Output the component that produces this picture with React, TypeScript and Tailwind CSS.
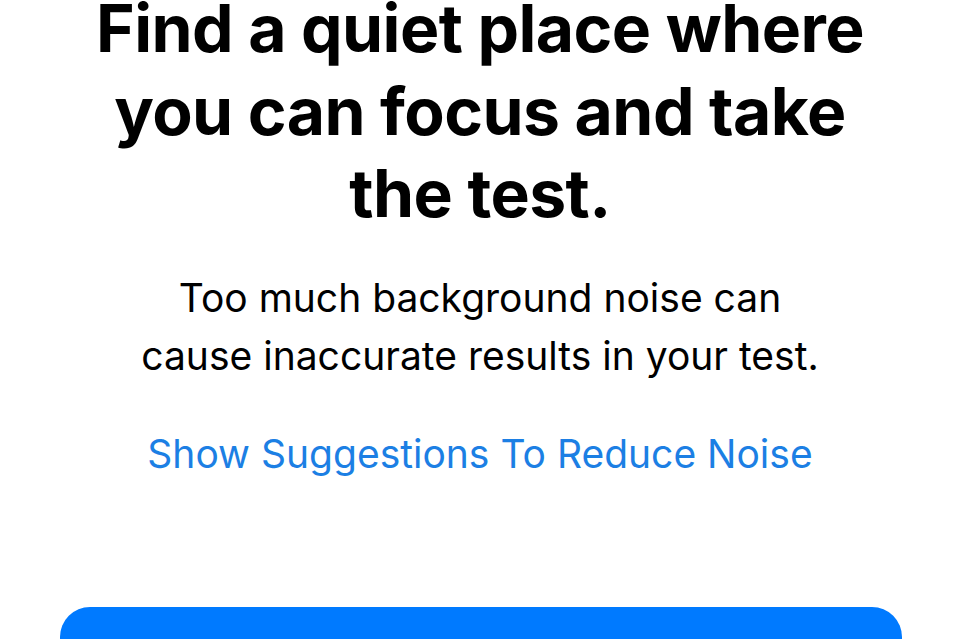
import React from 'react';

const App: React.FC = () => {
  return (
    <div
      className="w-[960px] h-[639px] overflow-hidden bg-white flex flex-col items-center text-center"
      style={{ fontFamily: 'Inter, "Noto Sans", sans-serif' }}
    >
      <h1 className="-mt-[13px] text-[66px] leading-[82.5px] font-bold text-black tracking-[-0.55px]">
        Find a quiet place where
        <br />
        you can focus and take
        <br />
        the test.
      </h1>

      <p className="mt-[34px] text-[39px] leading-[58px] font-normal text-black">
        Too much background noise can
        <br />
        cause inaccurate results in your test.
      </p>

      <a className="mt-[40px] text-[39px] leading-[58px] text-[#1c7fe4] cursor-pointer">
        Show Suggestions To Reduce Noise
      </a>

      <button className="mt-[124px] ml-[1px] w-[842px] h-[120px] shrink-0 rounded-[30px] bg-[#007aff]" />
    </div>
  );
};

export default App;
